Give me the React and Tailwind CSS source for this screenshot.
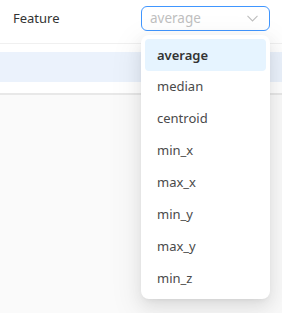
export default function App() {
  const items = ["average", "median", "centroid", "min_x", "max_x", "min_y", "max_y", "min_z"];
  return (
    <div className="relative w-[282px] h-[313px] bg-[#fafafa] overflow-hidden text-[13px]" style={{ fontFamily: '"Noto Sans", "Open Sans", sans-serif' }}>
      <div className="bg-white">
        <div className="h-[44px] flex items-center justify-between pl-[13px] pr-[12px] border-b border-[#f0f0f0]">
          <span className="text-[#333] -mt-[5px]">Feature</span>
          <div className="w-[129px] h-[25px] -mt-[6px] rounded-md border border-[#4096ff] flex items-center justify-between pl-[8px] pr-[11px]">
            <span className="text-[#bfbfbf] text-[13.5px]">average</span>
            <svg width="11" height="7" viewBox="0 0 11 7" fill="none" stroke="#bfbfbf" strokeWidth="1.1"><path d="M0.5 0.8 L5.5 6 L10.5 0.8" /></svg>
          </div>
        </div>
        <div className="pt-[8px] pb-[11px] border-b-2 border-[#e8e8e8]">
          <div className="h-[30px] bg-[#ebf2fc]" />
        </div>
      </div>
      <div className="absolute left-[141px] top-[35px] w-[129px] rounded-lg bg-white p-[4px] shadow-[0_6px_16px_0_rgba(0,0,0,0.08),0_3px_6px_-4px_rgba(0,0,0,0.12),0_9px_28px_8px_rgba(0,0,0,0.05)]">
        {items.map((it, i) => (
          <div
            key={it}
            className={
              i === 0
                ? "h-[32px] flex items-center pl-[12px] pt-[1px] rounded bg-[#e6f4ff] text-[#333] font-semibold"
                : "h-[32px] flex items-center pl-[12px] text-[#4a4a4a]"
            }
          >
            {it}
          </div>
        ))}
      </div>
    </div>
  );
}
